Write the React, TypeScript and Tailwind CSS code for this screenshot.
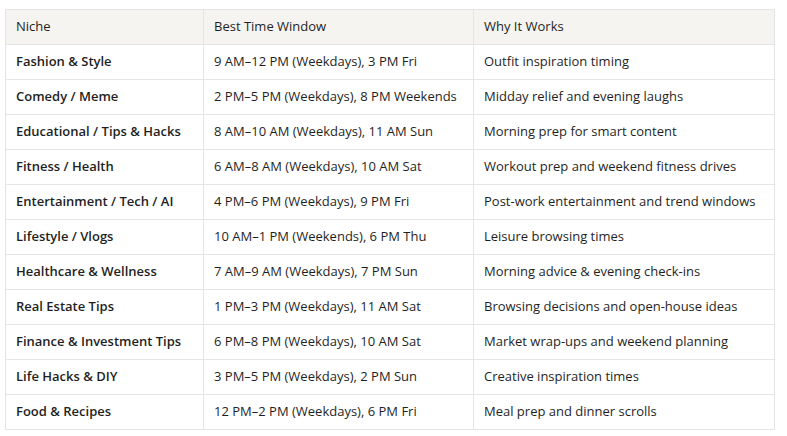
const rows: [string,string,string][] = [
["Fashion & Style","9 AM–12 PM (Weekdays), 3 PM Fri","Outfit inspiration timing"],
["Comedy / Meme","2 PM–5 PM (Weekdays), 8 PM Weekends","Midday relief and evening laughs"],
["Educational / Tips & Hacks","8 AM–10 AM (Weekdays), 11 AM Sun","Morning prep for smart content"],
["Fitness / Health","6 AM–8 AM (Weekdays), 10 AM Sat","Workout prep and weekend fitness drives"],
["Entertainment / Tech / AI","4 PM–6 PM (Weekdays), 9 PM Fri","Post-work entertainment and trend windows"],
["Lifestyle / Vlogs","10 AM–1 PM (Weekends), 6 PM Thu","Leisure browsing times"],
["Healthcare & Wellness","7 AM–9 AM (Weekdays), 7 PM Sun","Morning advice & evening check-ins"],
["Real Estate Tips","1 PM–3 PM (Weekdays), 11 AM Sat","Browsing decisions and open-house ideas"],
["Finance & Investment Tips","6 PM–8 PM (Weekdays), 10 AM Sat","Market wrap-ups and weekend planning"],
["Life Hacks & DIY","3 PM–5 PM (Weekdays), 2 PM Sun","Creative inspiration times"],
["Food & Recipes","12 PM–2 PM (Weekdays), 6 PM Fri","Meal prep and dinner scrolls"],
];
export default function App(){
  const cell="border border-[#e5e5e5] px-[10px] h-[35px] align-middle";
  return (
    <div className="bg-white w-[787px] h-[436px] pt-[9px] pl-[5px]" style={{fontFamily:'"Open Sans", sans-serif'}}>
      <table className="border-collapse text-[13px] text-[#1f1f1f]" style={{width:770}}>
        <colgroup><col style={{width:198}}/><col style={{width:270}}/><col/></colgroup>
        <thead><tr className="bg-[#f5f4f0]">
          <th className={cell+" text-left font-normal"}>Niche</th>
          <th className={cell+" text-left font-normal"}>Best Time Window</th>
          <th className={cell+" text-left font-normal"}>Why It Works</th>
        </tr></thead>
        <tbody>{rows.map(r=>(
          <tr key={r[0]}>
            <td className={cell+" font-semibold"}>{r[0]}</td>
            <td className={cell}>{r[1]}</td>
            <td className={cell}>{r[2]}</td>
          </tr>))}</tbody>
      </table>
    </div>
  );
}
